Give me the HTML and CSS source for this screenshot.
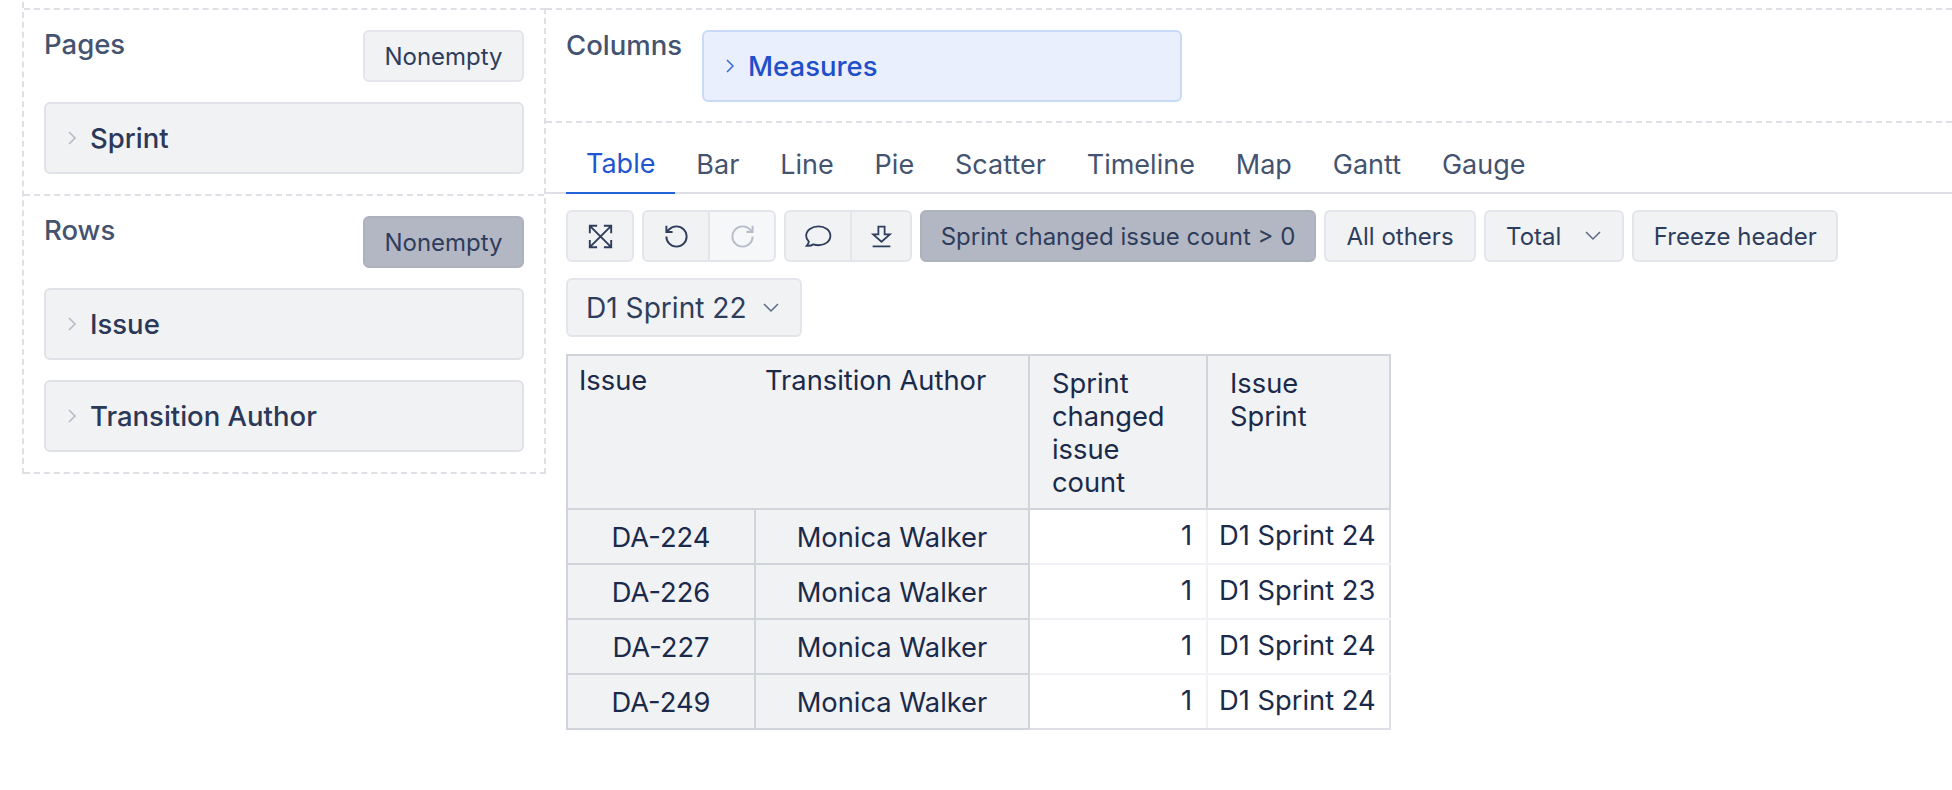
FILE: index.html
```html
<!DOCTYPE html>
<html lang="en">
<head>
<meta charset="utf-8">
<title>Report</title>
<link rel="stylesheet" href="styles.css">
</head>
<body>
<div class="app">
  <aside class="rail">
    <div class="panel">
      <section class="zone">
        <div class="zone-head"><span class="zone-title">Pages</span><button class="btn">Nonempty</button></div>
        <div class="dim"><svg class="chev" viewBox="0 0 12 24"><path d="M3 6l6 6-6 6"/></svg>Sprint</div>
      </section>
      <section class="zone zone-rows">
        <div class="zone-head"><span class="zone-title">Rows</span><button class="btn active">Nonempty</button></div>
        <div class="dim"><svg class="chev" viewBox="0 0 12 24"><path d="M3 6l6 6-6 6"/></svg>Issue</div>
        <div class="dim"><svg class="chev" viewBox="0 0 12 24"><path d="M3 6l6 6-6 6"/></svg>Transition Author</div>
      </section>
    </div>
  </aside>
  <main class="main">
    <section class="columns">
      <span class="zone-title col-title">Columns</span>
      <div class="dim measure"><svg class="chev" viewBox="0 0 12 24"><path d="M3 6l6 6-6 6"/></svg>Measures</div>
    </section>
    <nav class="tabs">
      <a class="tab current">Table</a><a class="tab">Bar</a><a class="tab">Line</a><a class="tab">Pie</a><a class="tab">Scatter</a><a class="tab">Timeline</a><a class="tab">Map</a><a class="tab">Gantt</a><a class="tab">Gauge</a>
    </nav>
    <div class="toolbar">
      <button class="btn icon-btn"><svg class="ico" viewBox="0 0 24 24"><path d="M2.500 2.500l19 19M21.500 2.500l-19 19M2.500 9V2.500H9M15 2.500h6.500V9M2.500 15v6.500H9M15 21.500h6.500V15"/></svg></button>
      <div class="group">
        <button class="btn icon-btn"><svg class="ico" viewBox="0 0 24 24"><path d="M3 12a9 9 0 1 0 9-9 9.750 9.750 0 0 0-6.740 2.740L3 8"/><path d="M3 2.500V8h5.500"/></svg></button>
        <button class="btn icon-btn disabled"><svg class="ico" viewBox="0 0 24 24"><path d="M21 12a9 9 0 1 1-9-9c2.520 0 4.930 1 6.740 2.740L21 8"/><path d="M21 2.500V8h-5.500"/></svg></button>
      </div>
      <div class="group group-alt">
        <button class="btn icon-btn"><svg class="ico ico-wide" viewBox="0 0 26 24"><path d="M13.500 3c6 0 11 3.600 11 8.800s-5 8.800-11 8.800c-1.700 0-3.300-.3-4.700-.8-1.700 1-4 1.500-6.300 1.300 1-1 1.800-2.300 2-3.800C2.900 15.700 2 13.800 2 11.800 2 6.600 7.500 3 13.500 3z"/></svg></button>
        <button class="btn icon-btn"><svg class="ico ico-dl" viewBox="0 0 24 24"><path d="M9 2.500h6v7.500h5l-8 7-8-7h5z"/><path d="M3.500 21.500h17"/></svg></button>
      </div>
      <button class="btn active wide">Sprint changed issue count &gt; 0</button>
      <button class="btn others">All others</button>
      <button class="btn select">Total<svg class="down" viewBox="0 0 24 24"><path d="M5 8l7 7 7-7"/></svg></button>
      <button class="btn freeze">Freeze header</button>
    </div>
    <div class="page-row">
      <button class="btn select page-select">D1 Sprint 22<svg class="down" viewBox="0 0 24 24"><path d="M5 8l7 7 7-7"/></svg></button>
    </div>
    <table class="grid">
      <colgroup><col class="c1"><col class="c2"><col class="c3"><col class="c4"></colgroup>
      <thead>
        <tr>
          <th class="h-row h-issue">Issue</th>
          <th class="h-row h-author">Transition Author</th>
          <th class="h-col">Sprint changed issue count</th>
          <th class="h-col">Issue<br>Sprint</th>
        </tr>
      </thead>
      <tbody>
        <tr><th class="r">DA-224</th><th class="r">Monica Walker</th><td class="num">1</td><td class="val">D1 Sprint 24</td></tr>
        <tr><th class="r">DA-226</th><th class="r">Monica Walker</th><td class="num">1</td><td class="val">D1 Sprint 23</td></tr>
        <tr><th class="r">DA-227</th><th class="r">Monica Walker</th><td class="num">1</td><td class="val">D1 Sprint 24</td></tr>
        <tr><th class="r">DA-249</th><th class="r">Monica Walker</th><td class="num">1</td><td class="val">D1 Sprint 24</td></tr>
      </tbody>
    </table>
  </main>
</div>
</body>
</html>
```

FILE: styles.css
```css
* { box-sizing: border-box; }
html, body { margin: 0; padding: 0; background: #fff; }
body {
  font-family: Inter, "Liberation Sans", sans-serif;
  font-size: 24px;
  color: #1b2a4a;
  width: 1952px;
  height: 790px;
  overflow: hidden;
}
.app { display: flex; align-items: flex-start; padding-top: 2px; }
.rail {
  flex: none;
  margin-left: 22px;
  padding-top: 6px;
  border-left: 2px dashed #dfe0e6;
}
.panel {
  width: 522px;
  border-top: 2px dashed #dfe0e6;
  border-right: 2px dashed #dfe0e6;
  border-bottom: 2px dashed #dfe0e6;
}
.zone { padding: 20px; display: flex; flex-direction: column; gap: 20px; }
.zone-rows { border-top: 2px dashed #dfe0e6; }
.zone-head { display: flex; justify-content: space-between; align-items: flex-start; height: 52px; }
.zone-title { font-size: 27.500px; font-weight: 500; color: #44536f; line-height: 28px; }
.btn {
  font: inherit;
  font-size: 24px;
  color: #2f3d5c;
  background: #f0f2f4;
  border: 2px solid #e4e5ea;
  border-radius: 6px;
  height: 52px;
  padding: 0 20px;
  display: inline-flex;
  align-items: center;
  justify-content: center;
  white-space: nowrap;
}
.zone-head .btn { width: 161px; padding: 0; }
.btn.active { background: #b3b7c3; border-color: #adb1be; }
.btn.others { padding: 0 20.500px; }
.btn.freeze { padding: 0 19.500px; }
.dim {
  height: 72px;
  background: #f0f2f4;
  border: 2px solid #e1e2e7;
  border-radius: 6px;
  display: flex;
  align-items: center;
  padding-left: 20px;
  font-size: 27.500px;
  font-weight: 500;
  color: #2b3857;
}
.chev { width: 12px; height: 24px; margin-right: 12px; flex: none; fill: none; stroke: #b5b8c4; stroke-width: 1.500; }
.main { flex: 1; min-width: 0; padding-top: 6px; }
.columns {
  display: flex;
  align-items: flex-start;
  height: 115px;
  padding: 20px 0 0 20px;
  border-top: 2px dashed #dfe0e6;
  border-bottom: 2px dashed #dfe0e6;
}
.col-title { width: 136px; flex: none; line-height: 30px; }
.measure { width: 480px; background: #e9effc; border-color: #c8daf8; color: #1f4fc9; }
.measure .chev { stroke: #3b6bd6; }
.tabs { display: flex; height: 71px; border-bottom: 2px solid #dfe0e6; padding-left: 20px; }
.tab {
  display: flex;
  align-items: center;
  padding: 12px 20px 0;
  margin-right: 0.900px;
  height: 71px;
  font-size: 27px;
  color: #44536f;
}
.tab.current { color: #1f56cf; border-bottom: 2px solid #2563d9; }
.toolbar { display: flex; gap: 8px; padding: 16px 0 0 20px; }
.group { display: flex; }
.group .btn:first-child { border-radius: 6px 0 0 6px; border-right-width: 1px; }
.group .btn:last-child { border-radius: 0 6px 6px 0; border-left-width: 1px; }
.icon-btn { padding: 0; width: 68px; color: #2f3d5c; }
.group .icon-btn { width: 67px; }
.group-alt .icon-btn:last-child { width: 61px; }
.disabled { background: #f6f7f9; color: #b9bdc9; }
.ico { width: 27px; height: 27px; fill: none; stroke: currentColor; stroke-width: 1.700; }
.ico-wide { width: 28px; height: 26px; }
.ico-dl { width: 25px; height: 25px; }
.wide { width: 396px; }
.select { padding: 0 17px 0 20px; }
.down { width: 24px; height: 24px; margin-left: 20px; fill: none; stroke: #5d6a85; stroke-width: 1.500; }
.page-row { padding: 16px 0 16px 20px; display: flex; }
.page-select { height: 59px; width: 236px; font-size: 28.100px; padding: 0 0 0 18px; justify-content: flex-start; }
.page-select .down { margin-left: 12px; }
.grid {
  margin: 1px 0 0 20px;
  border-collapse: collapse;
  table-layout: fixed;
  width: 823px;
  font-size: 27.300px;
  line-height: 33px;
}
.c1 { width: 188px; }
.c2 { width: 274px; }
.c3 { width: 178px; }
.c4 { width: 183px; }
thead th {
  height: 154px;
  background: #f0f2f4;
  font-weight: 400;
  text-align: left;
  vertical-align: top;
  border: 2px solid #d2d4dc;
}
.h-row { padding: 8px 0 0 10px; }
.h-issue { padding-left: 11px; border-right: 0; }
.h-author { border-left: 0; padding-left: 10px; }
.h-col { padding: 11px 30px 0 22px; }
tbody tr { height: 55px; }
.r {
  background: #f0f2f4;
  font-weight: 400;
  text-align: center;
  border: 2px solid #d2d4dc;
  padding: 1px 0 0;
}
td { border: 2px solid #f1f2f5; padding: 0 0 3px; }
tbody tr:last-child td { border-bottom-color: #dfe0e6; }
.num { text-align: right; padding-right: 14px; }
.val { padding-left: 11px; white-space: nowrap; border-right-color: #dfe0e6; }
```
